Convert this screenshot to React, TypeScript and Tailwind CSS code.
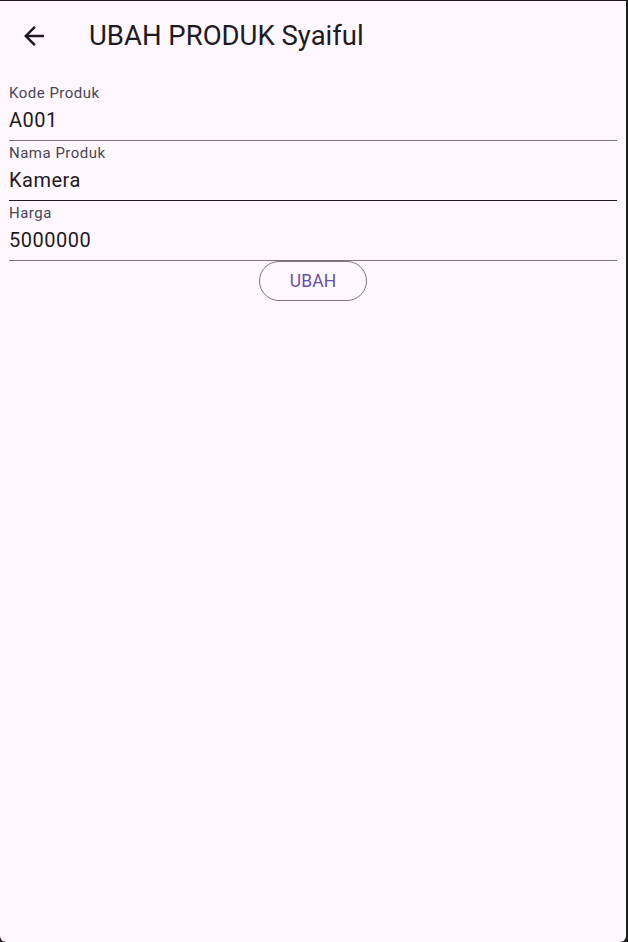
import React from "react";

function Field({ label, value, dark }: { label: string; value: string; dark?: boolean }) {
  return (
    <div
      className={
        "flex h-[60px] flex-col border-b " +
        (dark ? "border-[#1d1b20]" : "border-[#79747e]")
      }
    >
      <div className="mt-[2px] text-[15px] leading-[20px] tracking-[0.5px] text-[#49454f]">{label}</div>
      <div className="mt-[3px] text-[20px] leading-[28px] tracking-[0.5px] text-[#1d1b20]">{value}</div>
    </div>
  );
}

export default function App() {
  return (
    <div
      className="h-[942px] w-[628px] bg-[#1e1e1e] pt-px pr-[2px]"
      style={{ fontFamily: "Roboto, 'Liberation Sans', sans-serif" }}
    >
      <div className="flex h-full flex-col rounded-b-[6px] bg-[#fef7ff]">
        <div className="flex h-[70px] items-center">
          <div className="flex w-[68px] items-center justify-center text-[#1d1b20]">
            <svg width="30" height="30" viewBox="0 0 24 24" fill="currentColor">
              <path d="M20 11H7.83l5.59-5.59L12 4l-8 8 8 8 1.41-1.41L7.83 13H20v-2z" />
            </svg>
          </div>
          <div className="ml-[21px] text-[27.5px] leading-[36px] text-[#1d1b20]">UBAH PRODUK Syaiful</div>
        </div>
        <div className="flex flex-col px-[9px] pt-[10px]">
          <Field label="Kode Produk" value="A001" />
          <Field label="Nama Produk" value="Kamera" dark />
          <Field label="Harga" value="5000000" />
          <div className="flex justify-center">
            <button className="h-[40px] rounded-full border border-[#79747e] px-[30px] text-[17.5px] tracking-[0.1px] text-[#6750a4]">
              UBAH
            </button>
          </div>
        </div>
      </div>
    </div>
  );
}
